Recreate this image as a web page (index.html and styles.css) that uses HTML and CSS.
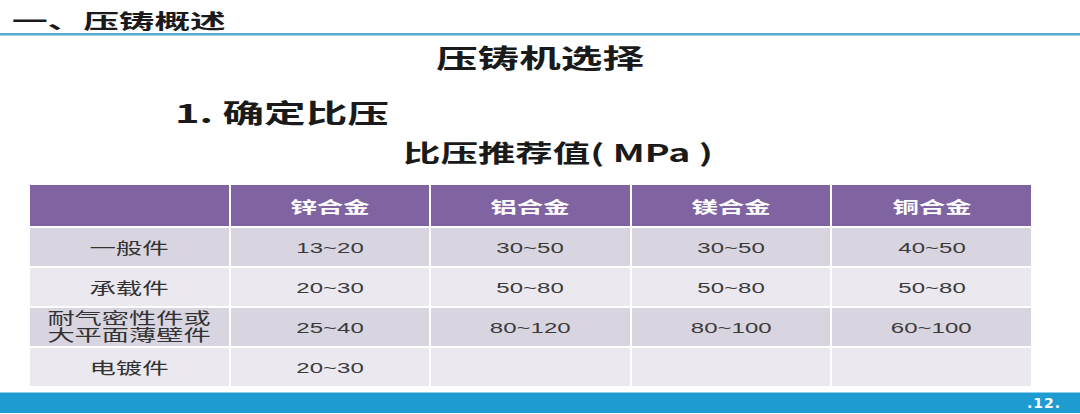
FILE: index.html
```html
<!DOCTYPE html>
<html lang="zh">
<head>
<meta charset="utf-8">
<link rel="stylesheet" href="styles.css">
</head>
<body>
<div class="page">
  <div class="topbar"><span class="sx sx-top">一、压铸概述</span></div>
  <h1 class="title"><span class="sx sx-title">压铸机选择</span></h1>
  <h2 class="sub"><span class="sx sx-sub">1. 确定比压</span></h2>
  <h3 class="cap"><span class="sx sx-cap">比压推荐值( MPa )</span></h3>
  <div class="grid">
    <div class="cell head"></div>
    <div class="cell head"><span class="cj">锌合金</span></div>
    <div class="cell head"><span class="cj">铝合金</span></div>
    <div class="cell head"><span class="cj">镁合金</span></div>
    <div class="cell head"><span class="cj">铜合金</span></div>

    <div class="cell dark"><span class="cj">一般件</span></div>
    <div class="cell dark"><span class="num">13~20</span></div>
    <div class="cell dark"><span class="num">30~50</span></div>
    <div class="cell dark"><span class="num">30~50</span></div>
    <div class="cell dark"><span class="num">40~50</span></div>

    <div class="cell light"><span class="cj">承载件</span></div>
    <div class="cell light"><span class="num">20~30</span></div>
    <div class="cell light"><span class="num">50~80</span></div>
    <div class="cell light"><span class="num">50~80</span></div>
    <div class="cell light"><span class="num">50~80</span></div>

    <div class="cell dark stack">
      <span class="cj line">耐气密性件或</span>
      <span class="cj line">大平面薄壁件</span>
    </div>
    <div class="cell dark"><span class="num">25~40</span></div>
    <div class="cell dark"><span class="num">80~120</span></div>
    <div class="cell dark"><span class="num">80~100</span></div>
    <div class="cell dark"><span class="num">60~100</span></div>

    <div class="cell light"><span class="cj">电镀件</span></div>
    <div class="cell light"><span class="num">20~30</span></div>
    <div class="cell light"></div>
    <div class="cell light"></div>
    <div class="cell light"></div>
  </div>
  <div class="footer"><span class="pg">.12.</span></div>
</div>
</body>
</html>
```

FILE: styles.css
```css
html, body {
  margin: 0;
  padding: 0;
  background: #ffffff;
}
.page {
  width: 1080px;
  height: 414px;
  display: flex;
  flex-direction: column;
  font-family: "Noto Sans CJK SC", "Noto Sans", sans-serif;
  color: #222;
  overflow: hidden;
}
.sx {
  display: inline-block;
  white-space: nowrap;
}
.topbar {
  height: 25px;
  padding: 8px 0 0 12px;
  line-height: 25px;
  font-size: 20px;
  font-weight: 700;
  color: #1a1a1a;
  border-bottom: 2px solid #55a9cc;
  box-shadow: 0 1px 0 #a9d4e6;
}
.sx-top {
  transform: scaleX(1.78);
  transform-origin: left center;
}
.title {
  margin: 0;
  height: 44px;
  line-height: 44px;
  font-size: 26px;
  font-weight: 700;
  text-align: center;
  color: #1a1a1a;
}
.sx-title {
  transform: scaleX(1.6);
  transform-origin: center center;
}
.sub {
  margin: 13px 0 0 175px;
  height: 40px;
  line-height: 40px;
  font-size: 26px;
  font-weight: 700;
  color: #1a1a1a;
}
.sx-sub {
  transform: scaleX(1.6);
  transform-origin: left center;
}
.cap {
  margin: 0 0 0 403px;
  height: 40px;
  line-height: 40px;
  font-size: 24px;
  font-weight: 700;
  color: #1a1a1a;
}
.sx-cap {
  transform: scaleX(1.56);
  transform-origin: left center;
}
.grid {
  margin: 13px 0 0 30px;
  width: 1001px;
  display: grid;
  grid-template-columns: repeat(5, 1fr);
  grid-template-rows: 41px repeat(4, 38px);
  gap: 2px;
}
.cell {
  display: flex;
  align-items: center;
  justify-content: center;
  font-size: 16px;
  color: #333;
}
.head {
  background: #8064a2;
  color: #ffffff;
  font-weight: 700;
}
.dark { background: #d9d5e0; }
.light { background: #ebe8ef; }
.cj {
  display: inline-block;
  white-space: nowrap;
  transform: scaleX(1.65);
  transform-origin: center center;
}
.stack {
  flex-direction: column;
  padding-bottom: 3px;
}
.line {
  display: block;
  height: 17px;
  line-height: 17px;
  font-size: 16px;
  transform: scaleX(1.7);
}
.num {
  display: inline-block;
  white-space: nowrap;
  font-family: "Liberation Sans", "DejaVu Sans", sans-serif;
  font-size: 15px;
  color: #3a3a3a;
  transform: scaleX(1.6);
  transform-origin: center center;
}
.footer {
  margin-top: 6px;
  height: 20px;
  border-top: 1px solid #8ccfe9;
  background: #1e9bd0;
  display: flex;
  align-items: center;
  justify-content: flex-end;
  padding-right: 19px;
}
.pg {
  color: #ffffff;
  font-family: "DejaVu Sans", sans-serif;
  font-weight: 700;
  font-size: 14px;
  letter-spacing: 1px;
}
```
